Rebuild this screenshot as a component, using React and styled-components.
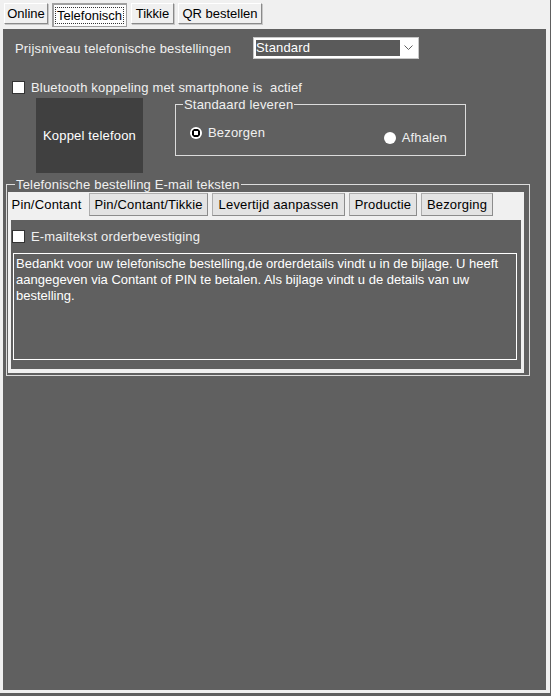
import React, { useState } from "react";
import styled, { createGlobalStyle } from "styled-components";

const GlobalStyle = createGlobalStyle`
  html, body {
    margin: 0;
    padding: 0;
    background: #606060;
  }
  body {
    font-family: "Liberation Sans", Arial, sans-serif;
    font-size: 13px;
    letter-spacing: 0.18px;
  }
`;

const Window = styled.div`
  width: 550px;
  height: 693px;
  background: #f0f0f0;
  display: flex;
  flex-direction: column;
`;

const TabStrip = styled.div`
  display: flex;
  align-items: flex-start;
  gap: 4px;
  height: 29px;
  padding: 3px 0 0 4px;
  box-sizing: border-box;
`;

const TopTab = styled.button`
  font: inherit;
  font-size: 13px;
  letter-spacing: 0;
  color: #000;
  margin: 0;
  padding: 0;
  width: ${(p) => p.$width}px;
  height: ${(p) => (p.$active ? 24 : 21)}px;
  background: ${(p) => (p.$active ? "#fcfcfc" : "#f0f0f0")};
  border: 1px solid #a0a0a0;
  border-color: ${(p) => (p.$active ? "#a0a0a0" : "#ffffff #8a8a8a #8a8a8a #ffffff")};
  box-shadow: ${(p) => (p.$active ? "inset 1px 1px 0 #a0a0a0" : "1px 1px 0 #c8c8c8")};
  display: flex;
  align-items: center;
  justify-content: center;
  cursor: pointer;
`;

const FocusText = styled.span`
  outline: ${(p) => (p.$active ? "1px dotted #333" : "none")};
  padding: 0 1px;
  line-height: 15px;
`;

const Page = styled.div`
  margin-left: 3px;
  width: 543px;
  height: 661px;
  background: #606060;
  color: #f0f0f0;
  display: flex;
  flex-direction: column;
`;

const PriceRow = styled.div`
  display: flex;
  align-items: center;
  margin: 8px 0 0 12px;
  height: 22px;
`;

const Label = styled.span`
  width: 238px;
  line-height: 15px;
`;

const Select = styled.div`
  width: 166px;
  height: 22px;
  box-sizing: border-box;
  border: 1px solid #c8c8c8;
  background: #fff;
  padding: 2px;
  display: flex;
  align-items: stretch;
`;

const SelectValue = styled.div`
  flex: 0 0 144px;
  background: #5a5a5a;
  color: #fff;
  line-height: 16px;
`;

const SelectArrow = styled.div`
  flex: 1;
  display: flex;
  align-items: center;
  justify-content: center;
`;

const CheckRow = styled.label`
  display: flex;
  align-items: center;
  gap: 6px;
  margin: ${(p) => p.$margin};
  line-height: 15px;
  cursor: pointer;
`;

const Box = styled.span`
  width: 13px;
  height: 13px;
  box-sizing: border-box;
  background: #fff;
  border: 1px solid #333;
  display: flex;
  align-items: center;
  justify-content: center;
  color: #000;
  font-size: 11px;
`;

const PairRow = styled.div`
  display: flex;
  align-items: flex-start;
  margin: 2px 0 0 33px;
  gap: 32px;
`;

const KoppelButton = styled.button`
  width: 107px;
  height: 75px;
  margin-top: 1px;
  background: #404040;
  color: #fff;
  border: none;
  font: inherit;
  font-size: 13px;
  letter-spacing: inherit;
  cursor: pointer;
`;

const GroupBox = styled.fieldset`
  margin: ${(p) => p.$margin || 0};
  padding: 0;
  width: ${(p) => p.$width}px;
  height: ${(p) => p.$height}px;
  box-sizing: border-box;
  border: 1px solid #dcdcdc;
  min-width: 0;
`;

const Legend = styled.legend`
  margin-left: ${(p) => p.$indent}px;
  padding: 0 1px;
  line-height: 15px;
  font-size: 13px;
  color: #f0f0f0;
`;

const RadioRow = styled.div`
  display: flex;
  justify-content: space-between;
  align-items: flex-start;
  padding: 13px 18px 0 14px;
`;

const RadioLabel = styled.label`
  display: flex;
  align-items: center;
  gap: 6px;
  line-height: 15px;
  margin-top: ${(p) => p.$offset || 0}px;
  cursor: pointer;
`;

const RadioDot = styled.span`
  width: 12px;
  height: 12px;
  border-radius: 50%;
  background: ${(p) =>
    p.$checked
      ? "radial-gradient(circle, #fff 0 2.2px, #000 2.4px 4.2px, #fff 4.4px)"
      : "#fff"};
`;

const TabControl = styled.div`
  margin: 0 5px 2px 1px;
  background: #f0f0f0;
  padding: 1px 3px 4px 0;
  height: 181px;
  box-sizing: border-box;
  display: flex;
  flex-direction: column;
`;

const TabRow = styled.div`
  display: flex;
  align-items: flex-start;
  gap: 4px;
  height: 27px;
`;

const InnerTab = styled.button`
  font: inherit;
  font-size: 13px;
  letter-spacing: inherit;
  color: #000;
  margin: 0;
  padding: 0;
  width: ${(p) => p.$width}px;
  height: 23px;
  background: ${(p) => (p.$active ? "#f0f0f0" : "#e3e3e3")};
  border: 1px solid ${(p) => (p.$active ? "#f0f0f0" : "#adadad")};
  border-bottom-color: ${(p) => (p.$active ? "#f0f0f0" : "#8c8c8c")};
  border-right-color: ${(p) => (p.$active ? "#f0f0f0" : "#8c8c8c")};
  cursor: pointer;
`;

const TabPanel = styled.div`
  margin-left: 3px;
  flex: 1;
  background: #606060;
  color: #f0f0f0;
  display: flex;
  flex-direction: column;
  padding: 9px 0 0 1px;
`;

const MailText = styled.div`
  margin: 9px 0 0 1px;
  width: 504px;
  height: 107px;
  box-sizing: border-box;
  border: 1px solid #fff;
  padding: 2px 4px 0 2px;
  line-height: 16px;
  letter-spacing: 0;
  color: #fff;
`;

const topTabs = [
  { label: "Online", width: 44 },
  { label: "Telefonisch", width: 75 },
  { label: "Tikkie", width: 43 },
  { label: "QR bestellen", width: 84 },
];
const mailTabs = [
  { label: "Pin/Contant", width: 77 },
  { label: "Pin/Contant/Tikkie", width: 119 },
  { label: "Levertijd aanpassen", width: 133 },
  { label: "Productie", width: 68 },
  { label: "Bezorging", width: 72 },
];

export default function App() {
  const [topTab, setTopTab] = useState(1);
  const [mailTab, setMailTab] = useState(0);
  const [bluetooth, setBluetooth] = useState(false);
  const [mailConfirm, setMailConfirm] = useState(false);
  const [delivery, setDelivery] = useState("bezorgen");

  return (
    <>
      <GlobalStyle />
      <Window>
        <TabStrip>
          {topTabs.map((t, i) => (
            <TopTab key={t.label} $width={t.width} $active={i === topTab} onClick={() => setTopTab(i)}>
              <FocusText $active={i === topTab}>{t.label}</FocusText>
            </TopTab>
          ))}
        </TabStrip>
        <Page>
          <PriceRow>
            <Label>Prijsniveau telefonische bestellingen</Label>
            <Select>
              <SelectValue>Standard</SelectValue>
              <SelectArrow>
                <svg width="9" height="6" viewBox="0 0 9 6">
                  <path d="M0.5 0.5 L4.5 4.5 L8.5 0.5" fill="none" stroke="#606060" strokeWidth="1" />
                </svg>
              </SelectArrow>
            </Select>
          </PriceRow>

          <CheckRow $margin="21px 0 0 9px" onClick={() => setBluetooth(!bluetooth)}>
            <Box>{bluetooth ? "✓" : ""}</Box>
            Bluetooth koppeling met smartphone is &nbsp;actief
          </CheckRow>

          <PairRow>
            <KoppelButton>Koppel telefoon</KoppelButton>
            <GroupBox $width={291} $height={59}>
              <Legend $indent={7}>Standaard leveren</Legend>
              <RadioRow>
                <RadioLabel onClick={() => setDelivery("bezorgen")}>
                  <RadioDot $checked={delivery === "bezorgen"} />
                  Bezorgen
                </RadioLabel>
                <RadioLabel $offset={5} onClick={() => setDelivery("afhalen")}>
                  <RadioDot $checked={delivery === "afhalen"} />
                  Afhalen
                </RadioLabel>
              </RadioRow>
            </GroupBox>
          </PairRow>

          <GroupBox $width={524} $height={199} $margin="4px 0 0 3px">
            <Legend $indent={8}>Telefonische bestelling E-mail teksten</Legend>
            <TabControl>
              <TabRow>
                {mailTabs.map((t, i) => (
                  <InnerTab key={t.label} $width={t.width} $active={i === mailTab} onClick={() => setMailTab(i)}>
                    {t.label}
                  </InnerTab>
                ))}
              </TabRow>
              <TabPanel>
                <CheckRow $margin="0" onClick={() => setMailConfirm(!mailConfirm)}>
                  <Box>{mailConfirm ? "✓" : ""}</Box>
                  E-mailtekst orderbevestiging
                </CheckRow>
                <MailText>
                  Bedankt voor uw telefonische bestelling,de orderdetails vindt u in de bijlage. U heeft
                  aangegeven via Contant of PIN te betalen. Als bijlage vindt u de details van uw
                  bestelling.
                </MailText>
              </TabPanel>
            </TabControl>
          </GroupBox>
        </Page>
      </Window>
    </>
  );
}
